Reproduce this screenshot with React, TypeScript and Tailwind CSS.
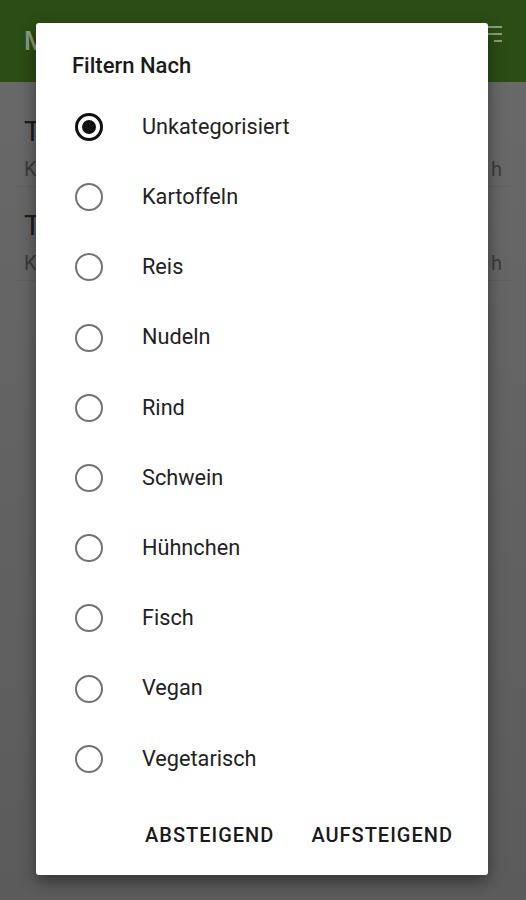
import { FC, useState } from "react";

const categories = [
  "Unkategorisiert",
  "Kartoffeln",
  "Reis",
  "Nudeln",
  "Rind",
  "Schwein",
  "Hühnchen",
  "Fisch",
  "Vegan",
  "Vegetarisch",
];

const App: FC = () => {
  const [selected, setSelected] = useState<number>(0);

  return (
    <div
      className="relative h-[900px] w-[526px] overflow-hidden bg-gradient-to-b from-[#6a6a6a] to-[#5b5b5b]"
      style={{ fontFamily: "Roboto, 'Noto Sans', sans-serif" }}
    >
      {/* app bar behind the scrim */}
      <div className="flex h-[82px] items-center justify-between bg-[#2c4d14] px-6">
        <span className="text-[26px] font-medium text-[#8a9c80]">M</span>
        <div className="-mt-[14px] flex flex-col items-end gap-[5px]">
          <span className="h-[2px] w-[20px] bg-[#8a9c80]" />
          <span className="h-[2px] w-[14px] bg-[#8a9c80]" />
          <span className="h-[2px] w-[8px] bg-[#8a9c80]" />
        </div>
      </div>

      {/* list behind the scrim */}
      <div className="px-4 pt-[11px]">
        {[0, 1].map((i) => (
          <div key={i} className="flex h-[94px] flex-col border-b border-[#5f5f5f] px-2 pt-[22px]">
            <span className="text-[28px] leading-[34px] text-[#1c1c1c]">T</span>
            <div className="mt-[8px] flex justify-between text-[20px] leading-[24px] text-[#3c3c3c]">
              <span>K</span>
              <span>h</span>
            </div>
          </div>
        ))}
      </div>

      {/* dialog */}
      <div className="absolute left-[36px] top-[23px] flex h-[852px] w-[452px] flex-col rounded-[3px] bg-white shadow-[0_6px_16px_rgba(0,0,0,0.45)]">
        <h2 className="pl-[36px] pt-[31px] text-[22px] font-medium leading-[24px] text-[#1a1a1a]">
          Filtern Nach
        </h2>
        <div className="mt-[14px] flex flex-col">
          {categories.map((category, index) => (
            <button
              key={category}
              className="flex h-[70.2px] items-center pl-[39px] text-left"
              onClick={() => setSelected(index)}
            >
              {selected === index ? (
                <span className="flex h-[28px] w-[28px] items-center justify-center rounded-full border-[3px] border-[#111111]">
                  <span className="h-[14px] w-[14px] rounded-full bg-[#111111]" />
                </span>
              ) : (
                <span className="h-[28px] w-[28px] rounded-full border-[2.5px] border-[#737373]" />
              )}
              <span className="ml-[39px] text-[21.7px] text-[#222222]">{category}</span>
            </button>
          ))}
        </div>
        <div className="flex flex-1 items-center justify-end gap-[37px] pr-[35px] pt-[2px]">
          <button className="text-[20px] font-medium tracking-[1px] text-[#1a1a1a]">ABSTEIGEND</button>
          <button className="text-[20px] font-medium tracking-[1px] text-[#1a1a1a]">AUFSTEIGEND</button>
        </div>
      </div>
    </div>
  );
};

export default App;
